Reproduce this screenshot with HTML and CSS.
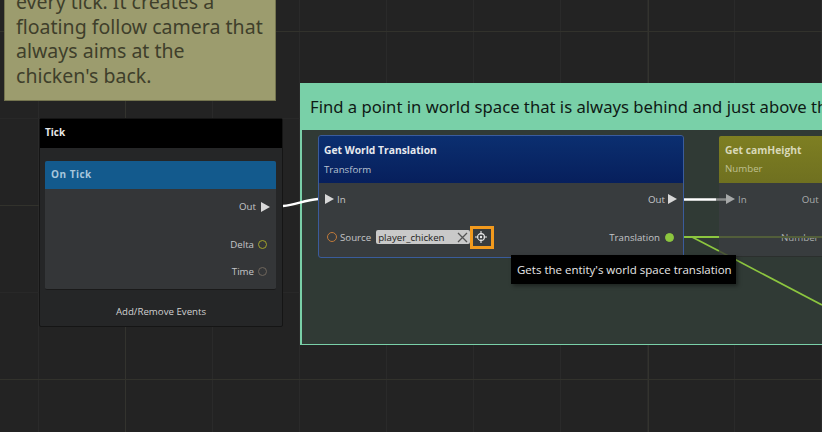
FILE: index.html
```html
<!DOCTYPE html>
<html lang="en">
<head>
    <meta charset="UTF-8">
    <title>Script Canvas Graph</title>
    <link rel="stylesheet" href="styles.css">
</head>
<body>
<div class="canvas">
    <div class="grid"></div>

    <div class="note">
        <p>every tick. It creates a floating follow camera that always aims at the chicken's back.</p>
    </div>

    <div class="tick">
        <div class="tick-title">Tick</div>
        <div class="tick-inner">
            <div class="tick-head">On Tick</div>
            <div class="tick-body">
                <div class="row-out">Out <svg class="arrow" viewBox="0 0 9 10"><path d="M0 0L9 5L0 10Z"/></svg></div>
                <div class="row-pin row-delta">Delta <span class="pin pin-yellow"></span></div>
                <div class="row-pin row-time">Time <span class="pin pin-grey"></span></div>
            </div>
        </div>
        <div class="tick-foot">Add/Remove Events</div>
    </div>

    <div class="group">
        <div class="group-title">Find a point in world space that is always behind and just above the chicken</div>
    </div>

    <div class="node node-world">
        <div class="node-head head-blue">
            <div class="node-name">Get World Translation</div>
            <div class="node-type">Transform</div>
        </div>
        <div class="node-body">
            <div class="ports">
                <span class="port"><svg class="arrow" viewBox="0 0 9 10"><path d="M0 0L9 5L0 10Z"/></svg> In</span>
                <span class="port">Out <svg class="arrow" viewBox="0 0 9 10"><path d="M0 0L9 5L0 10Z"/></svg></span>
            </div>
            <div class="ports ports-data">
                <span class="port">
                    <span class="pin pin-orange"></span>
                    <span class="src-label">Source</span>
                    <span class="field">player_chicken
                        <svg class="clear" viewBox="0 0 11 11"><path d="M1 1L10 10M10 1L1 10"/></svg>
                    </span>
                    <span class="target">
                        <svg viewBox="0 0 14 14"><circle cx="7" cy="7" r="4"/><path d="M7 0V4M7 10V14M0 7H4M10 7H14"/><circle class="dot" cx="7" cy="7" r="1.4"/></svg>
                    </span>
                </span>
                <span class="port">Translation <span class="pin pin-green"></span></span>
            </div>
        </div>
    </div>

    <div class="node node-cam">
        <div class="node-head head-olive">
            <div class="node-name">Get camHeight</div>
            <div class="node-type">Number</div>
        </div>
        <div class="node-body">
            <div class="ports ports-cam">
                <span class="port port-dim"><svg class="arrow arrow-dim" viewBox="0 0 9 10"><path d="M0 0L9 5L0 10Z"/></svg> In</span>
                <span class="port port-dim port-out">Out</span>
            </div>
            <div class="ports ports-data ports-cam">
                <span class="port port-dim port-number">Number</span>
            </div>
        </div>
    </div>

    <svg class="wires" viewBox="0 0 822 432">
        <path class="wire-white" d="M283 206C296 205 304 200 318 199"/>
        <path class="wire-white" d="M684 199.500H716"/>
        <path class="wire-fade" d="M716 199.500H726"/>
        <path class="wire-green" d="M684 237H719"/>
        <path class="wire-dim" d="M719 237H822"/>
        <path class="wire-green-thin" d="M692 237L719 251"/>
        <path class="wire-diag-dim" d="M719 251L731 257.300"/>
        <path class="wire-green-thin" d="M731 257.300L822 305"/>
    </svg>

    <div class="focus"></div>
    <div class="tooltip">Gets the entity's world space translation</div>
</div>
</body>
</html>
```

FILE: styles.css
```css
* {
    box-sizing: border-box;
}
html, body {
    margin: 0;
    height: 100%;
    overflow: hidden;
}
body {
    background-color: #232323;
    font-family: 'Open Sans', sans-serif;
    font-size: 9.700px;
    color: #c4c6c8;
}
.canvas {
    position: relative;
    width: 822px;
    height: 432px;
    overflow: hidden;
}
.grid {
    position: absolute;
    inset: 0;
    background-image:
        linear-gradient(#32322c 1px, transparent 1px),
        linear-gradient(90deg, #33332e 1px, transparent 1px),
        linear-gradient(#282828 1px, transparent 1px),
        linear-gradient(90deg, #2a2a2a 1px, transparent 1px);
    background-size: 174px 174px, 523px 523px, 87px 87px, 87px 87px;
    background-position: 0 31px, 125px 0, 0 31px, 38px 0;
}

/* comment note */
.note {
    position: absolute;
    left: 4px;
    top: -30px;
    width: 272px;
    height: 131px;
    padding: 20px 8px 0 11px;
    background-color: #9c9c6e;
    border: 1px solid #74744f;
    border-top: none;
}
.note p {
    margin: 0;
    font-family: 'Noto Sans', sans-serif;
    font-size: 19.550px;
    line-height: 24.700px;
    color: #3f3f2b;
}

/* tick node */
.tick {
    position: absolute;
    left: 39px;
    top: 118px;
    width: 244px;
    height: 209px;
    background-color: #252627;
    border: 1px solid #151515;
    border-radius: 2px;
}
.tick-title {
    height: 29px;
    padding: 6px 5px;
    background-color: #000;
    color: #e8e8e8;
    font-size: 10px;
    font-weight: 700;
}
.tick-inner {
    margin: 13px 6px 0 5px;
    height: 129px;
    border-radius: 2px;
    overflow: hidden;
    background-color: #343638;
    border-bottom: 1px solid #1a1a1a;
}
.tick-head {
    height: 28px;
    padding: 6px;
    background-color: #135a8d;
    color: #a8c6dc;
    font-weight: 700;
    font-size: 10px;
    letter-spacing: .5px;
}
.tick-body {
    position: relative;
    height: 101px;
}
.row-out, .row-pin {
    position: absolute;
    right: 9px;
    display: flex;
    align-items: center;
    gap: 4px;
}
.row-out {
    top: 11px;
    right: 6px;
    gap: 5px;
}
.row-delta {
    top: 49px;
}
.row-time {
    top: 76px;
}
.arrow {
    width: 9px;
    height: 10px;
    fill: #d8d8d8;
    flex: none;
}
.arrow-dim {
    fill: #a6a8a8;
}
.pin {
    display: inline-block;
    width: 9px;
    height: 9px;
    border-radius: 50%;
    border: 1px solid;
    flex: none;
}
.pin-yellow { border-color: #a3a32a; }
.pin-grey { border-color: #6f665c; }
.pin-orange {
    width: 10px;
    height: 10px;
    margin-right: -1px;
    border-color: #c07a3a;
}
.pin-green {
    border-color: #8cc63f;
    background-color: #8cc63f;
}
.tick-foot {
    margin-top: 15px;
    text-align: center;
    color: #d0d0d0;
}

/* group box */
.group {
    position: absolute;
    left: 300px;
    top: 83px;
    width: 560px;
    height: 262px;
    background-color: #303a35;
    border: 2px solid #79d0a8;
    border-bottom-width: 1px;
}
.group-title {
    height: 45px;
    padding: 5px 8px;
    background-color: #79d0a8;
    color: #0f1a15;
    font-family: 'Noto Sans', sans-serif;
    font-size: 16.660px;
    line-height: 34px;
    white-space: nowrap;
}

/* graph nodes */
.node {
    position: absolute;
    top: 135px;
    height: 123px;
    background-color: #383c3e;
    border-radius: 3px;
}
.node-world {
    left: 318px;
    width: 366px;
    border: 1px solid #3a5c9c;
}
.node-cam {
    left: 719px;
    width: 160px;
    top: 136px;
    height: 121px;
    border-bottom: 1px solid #2b2f2d;
}
.node-head {
    height: 47px;
    padding: 7px 5px;
    border-radius: 2px 2px 0 0;
}
.head-blue {
    background: linear-gradient(#0b2f70, #071f5c);
}
.head-olive {
    padding-left: 6px;
    background: linear-gradient(#7e7f22, #6f7020);
}
.node-name {
    font-weight: 700;
    color: #e6e9ee;
    font-size: 10.300px;
    line-height: 15px;
}
.head-olive .node-name {
    color: #d8d8b8;
}
.node-type {
    margin-top: 5px;
    color: #b9c3d2;
    line-height: 14px;
}
.head-olive .node-type {
    margin-top: 4px;
    color: #bfc090;
}
.node-body {
    padding: 0 6px;
}
.node-cam .node-body {
    padding: 0 7px;
}
.ports {
    display: flex;
    justify-content: space-between;
    align-items: center;
    height: 20px;
    margin-top: 6px;
}
.ports-data {
    height: 24px;
    margin-top: 16px;
    padding: 0 3px 0 2px;
}
.ports-cam {
    justify-content: flex-start;
    padding: 0;
}
.port {
    display: flex;
    align-items: center;
    gap: 3px;
}
.ports-data .port {
    gap: 5px;
}
.port-dim {
    color: #a9adad;
}
.port-out {
    margin-left: 55px;
}
.port-number {
    margin-left: 55px;
}
.src-label {
    margin-left: -1px;
    margin-right: 1px;
}
.field {
    display: flex;
    align-items: center;
    justify-content: space-between;
    width: 94px;
    height: 14px;
    margin-left: -1px;
    padding: 0 2px;
    background-color: #c9c9c9;
    border-radius: 2px;
    color: #222;
    white-space: nowrap;
}
.clear {
    width: 11px;
    height: 11px;
    stroke: #555;
    stroke-width: 1.300;
    fill: none;
}
.target {
    display: flex;
}
.target svg {
    width: 12px;
    height: 12px;
    stroke: #e8e8e8;
    stroke-width: 1.300;
    fill: none;
}
.target .dot {
    fill: #e8e8e8;
    stroke: none;
}

/* wires and overlays */
.wires {
    position: absolute;
    inset: 0;
    width: 822px;
    height: 432px;
    fill: none;
    pointer-events: none;
}
.wire-white {
    stroke: #fff;
    stroke-width: 2.500;
}
.wire-fade {
    stroke: #8a8c8c;
    stroke-width: 2.500;
}
.wire-green {
    stroke: #8cc63f;
    stroke-width: 2;
}
.wire-green-thin {
    stroke: #8cc63f;
    stroke-width: 1.700;
}
.wire-diag-dim {
    stroke: #4d5a38;
    stroke-width: 1.700;
}
.wire-dim {
    stroke: #525e3a;
    stroke-width: 2;
}
.focus {
    position: absolute;
    left: 470px;
    top: 226px;
    width: 24px;
    height: 23px;
    border: 3px solid #f29a1d;
}
.tooltip {
    position: absolute;
    left: 511px;
    top: 255px;
    width: 225px;
    height: 29px;
    padding: 0 6px;
    background-color: #000;
    color: #e8e8e8;
    font-size: 11.500px;
    line-height: 29px;
    white-space: nowrap;
    box-shadow: 2px 2px 4px rgba(0, 0, 0, .4);
}
```
